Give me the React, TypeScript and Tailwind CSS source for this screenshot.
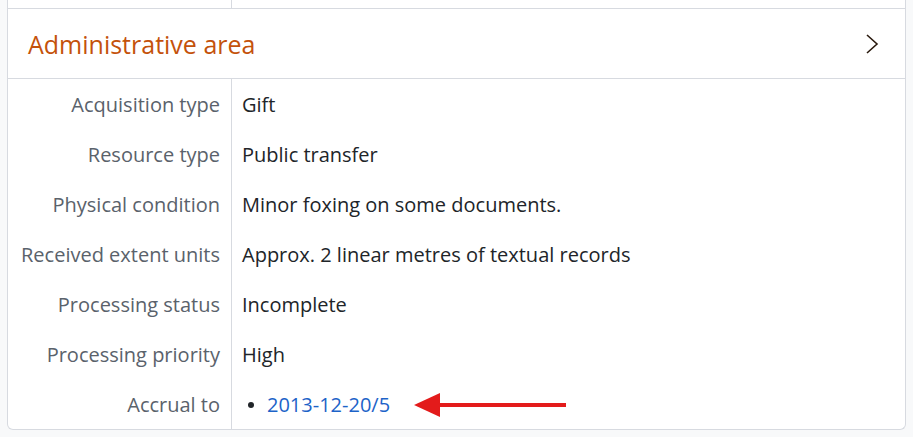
const rows: [string, string][] = [
  ['Acquisition type', 'Gift'],
  ['Resource type', 'Public transfer'],
  ['Physical condition', 'Minor foxing on some documents.'],
  ['Received extent units', 'Approx. 2 linear metres of textual records'],
  ['Processing status', 'Incomplete'],
  ['Processing priority', 'High'],
];

function Row({ label, children }: { label: string; children: React.ReactNode }) {
  return (
    <div className="flex h-[50px]">
      <div className="w-[224px] shrink-0 border-r border-[#d7dae0] pr-[11px] pt-[2px] flex items-center justify-end text-[#5a626b]">
        {label}
      </div>
      <div className="flex-1 pl-[10px] pt-[2px] flex items-center text-[#212529]">{children}</div>
    </div>
  );
}

export default function App() {
  return (
    <div
      className="min-h-[437px] bg-[#f8f9fa] px-[7px] pb-[7px]"
      style={{ fontFamily: '"Open Sans", "Liberation Sans", sans-serif' }}
    >
      <div className="bg-white border-x border-b border-[#d7dae0] rounded-b-[6px] text-[20px] leading-[30px]">
        <div className="flex h-[9px] border-b border-[#d7dae0]">
          <div className="w-[224px] shrink-0 border-r border-[#d7dae0]" />
        </div>
        <div className="flex h-[70px] items-center justify-between pl-[20px] pr-[26px] border-b border-[#d7dae0]">
          <h2 className="text-[25px] leading-[32px] text-[#c4520b]">Administrative area</h2>
          <svg width="14" height="22" viewBox="0 0 14 22" fill="none">
            <path d="M2 2 L12 11 L2 20" stroke="#2a1a0e" strokeWidth="1.6" />
          </svg>
        </div>
        {rows.map(([label, value]) => (
          <Row key={label} label={label}>
            {value}
          </Row>
        ))}
        <Row label="Accrual to">
          <ul className="flex items-center">
            <li className="flex items-center">
              <span className="w-[6px] h-[6px] rounded-full bg-[#212529] ml-[6px] mr-[13px]" />
              <a href="#" className="text-[#1d63c8]">2013-12-20/5</a>
            </li>
          </ul>
          <svg width="154" height="26" viewBox="0 0 154 26" className="ml-[24px]">
            <path d="M24 11 H152 V15 H24 Z" fill="#e31b1b" />
            <path d="M0 13 L26 1 L26 25 Z" fill="#e31b1b" />
          </svg>
        </Row>
      </div>
    </div>
  );
}
